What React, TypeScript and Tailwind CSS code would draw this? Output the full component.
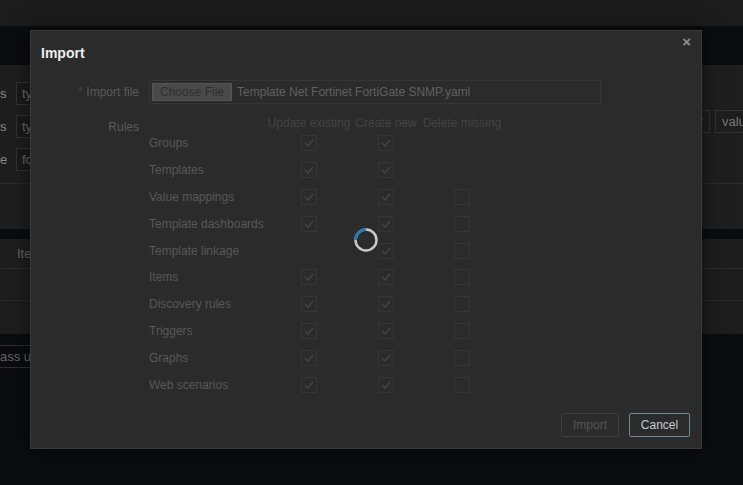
const rules: { name: string; u: boolean; c: boolean; d: boolean | null }[] = [
  { name: "Groups", u: true, c: true, d: null },
  { name: "Templates", u: true, c: true, d: null },
  { name: "Value mappings", u: true, c: true, d: false },
  { name: "Template dashboards", u: true, c: true, d: false },
  { name: "Template linkage", u: false, c: true, d: false },
  { name: "Items", u: true, c: true, d: false },
  { name: "Discovery rules", u: true, c: true, d: false },
  { name: "Triggers", u: true, c: true, d: false },
  { name: "Graphs", u: true, c: true, d: false },
  { name: "Web scenarios", u: true, c: true, d: false },
]

const Check = ({ on }: { on: boolean }) => (
  <span className="w-4 h-4 border border-[#363636] flex items-center justify-center">
    {on && (
      <svg width="10" height="8" viewBox="0 0 10 8" fill="none">
        <path d="M1 4l3 3 5-6" stroke="#444" strokeWidth="1.5" />
      </svg>
    )}
  </span>
)

const Cell = ({ v }: { v: boolean | null }) => (
  <div className="flex justify-center items-center">{v !== null && <Check on={v} />}</div>
)

const Spinner = () => (
  <svg width="24" height="24" viewBox="0 0 24 24">
    <circle cx="12" cy="12" r="10.5" fill="none" stroke="#c9c9c9" strokeWidth="2.5" />
    <path d="M1.5 12A10.5 10.5 0 0 1 12 1.5" fill="none" stroke="#1f78bd" strokeWidth="2.5" />
  </svg>
)

const App: React.FC = () => {
  return (
    <div className="relative w-[743px] h-[485px] overflow-hidden bg-[#0b0c0e] font-['Liberation_Sans',Arial,sans-serif] text-[12px]">
      {/* page behind the dialog */}
      <div className="h-[26px] bg-[#1c1c1c]" />
      <div className="h-[39px]" />
      <div className="h-[164px] bg-[#1e1e1e] flex flex-col">
        <div className="flex justify-between pt-[17px] h-[118px]">
          <div className="flex flex-col gap-[10px]">
            {[
              ["s", "ty"],
              ["s", "ty"],
              ["e", "fo"],
            ].map(([l, v], i) => (
              <div key={i} className="flex items-center h-[23px]">
                <span className="w-[8px] text-[#8a8a8a] text-[13px] leading-none">{l}</span>
                <span className="ml-[8px] w-[80px] h-[23px] border border-[#333] bg-[#1a1a1a] px-[5px] flex items-center text-[#6a6a6a] text-[13px]">{v}</span>
              </div>
            ))}
          </div>
          <div className="flex gap-[5px] mt-[28px] h-[23px]">
            <span className="w-[20px] h-[23px] border border-[#333] flex items-center justify-end pr-[4px] text-[#666] text-[9px]">✓</span>
            <span className="w-[28px] h-[23px] border border-[#333] border-r-0 pl-[6px] flex items-center text-[#777] text-[13px] whitespace-nowrap">valu</span>
          </div>
        </div>
        <div className="border-t border-[#2c2c2c]" />
      </div>
      <div className="h-[10px]" />
      <div className="bg-[#1d1d1d]">
        <div className="h-[30px] flex items-center pl-[17px] text-[#666] text-[13px] border-b border-[#2c2c2c]">Items</div>
        <div className="h-[32px] border-b border-[#2a2a2a]" />
        <div className="h-[33px]" />
      </div>
      <div className="h-[11px]" />
      <div className="h-[23px] w-[110px] border border-l-0 border-[#2e2e2e] flex items-center text-[#666] text-[13px] whitespace-nowrap">
        ass updates
      </div>

      {/* dialog */}
      <div className="absolute left-[30px] top-[30px] w-[672px] h-[419px] bg-[#2b2b2b] border border-[#3a3a3a] shadow-[0_0_20px_rgba(0,0,0,0.5)] flex flex-col">
        <div className="relative h-[43px] pl-[10px] pt-[13px]">
          <h2 className="text-[14px] font-bold text-[#eeeeee] leading-[18px]">Import</h2>
          <span className="absolute right-[10px] top-0 text-[15px] font-bold text-[#8e8e8e]">×</span>
        </div>

        <div className="flex-1 relative">
          {/* file row */}
          <div className="flex items-center mt-[6px]">
            <div className="w-[108px] text-right text-[#5a5a5a]">
              <span className="text-[#6b3434] mr-[4px]">*</span>Import file
            </div>
            <div className="ml-[10px] w-[452px] h-[24px] border border-[#363636] flex items-center px-[2px] text-[#606060]">
              <span className="h-[18px] px-[7px] bg-[#4a4a4a] border border-[#555] text-[#2e2e2e] flex items-center">Choose File</span>
              <span className="ml-[5px]">Template Net Fortinet FortiGate SNMP.yaml</span>
            </div>
          </div>

          {/* rules */}
          <div className="flex mt-[10px]">
            <div className="w-[108px] text-right text-[#5a5a5a] pt-[4px]">Rules</div>
            <div className="ml-[10px]">
              <div className="grid grid-cols-[118px_84px_70px_82px] h-[16px] items-center text-[#444]">
                <span />
                <span className="text-center whitespace-nowrap">Update existing</span>
                <span className="text-center whitespace-nowrap">Create new</span>
                <span className="text-center whitespace-nowrap">Delete missing</span>
              </div>
              {rules.map((r) => (
                <div key={r.name} className="grid grid-cols-[118px_84px_70px_82px] h-[26.8px] items-center text-[#585858]">
                  <span className="whitespace-nowrap">{r.name}</span>
                  <Cell v={r.u ? true : null} />
                  <Cell v={r.c} />
                  <Cell v={r.d} />
                </div>
              ))}
            </div>
          </div>

          <div className="absolute left-[323px] top-[154px]">
            <Spinner />
          </div>
        </div>

        <div className="flex justify-end gap-[10px] pr-[11px] pb-[11px]">
          <button className="w-[58px] h-[24px] border border-[#3e3e3e] rounded-[2px] text-[#555]">Import</button>
          <button className="w-[61px] h-[24px] border border-[#6c8a9c] rounded-[2px] text-[#c4ccd2]">Cancel</button>
        </div>
      </div>
    </div>
  )
}

export default App
